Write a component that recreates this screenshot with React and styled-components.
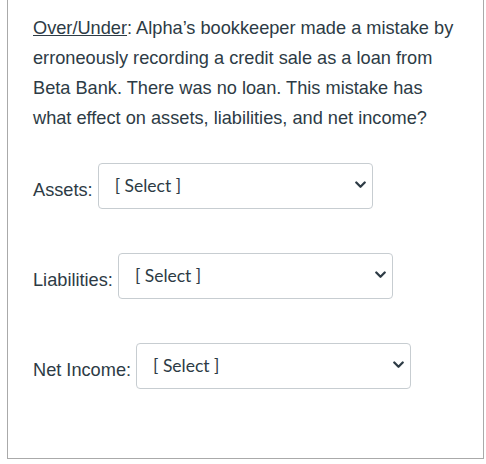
import React from "react";
import styled, { createGlobalStyle } from "styled-components";

const Global = createGlobalStyle`
  html, body { margin: 0; padding: 0; background: #fff; }
  body { font-family: "Liberation Sans", Arial, sans-serif; color: #2d3b45; }
`;

const Frame = styled.div`
  box-sizing: border-box;
  margin-left: 7px;
  width: 477px;
  height: 459px;
  border: 1px solid #aaaaaa;
  border-top: none;
  padding: 13px 24px 0 25px;
`;

const Question = styled.p`
  margin: 0;
  font-size: 18.2px;
  line-height: 30px;
  color: #2d3b45;
`;

const Term = styled.span`
  text-decoration: underline;
`;

const Field = styled.div`
  display: flex;
  align-items: center;
  gap: 5px;
  margin-top: ${(p) => p.$top}px;
`;

const Label = styled.span`
  font-size: 18.2px;
  padding-top: 9px;
  color: #2d3b45;
`;

const SelectBox = styled.div`
  box-sizing: border-box;
  width: 275px;
  height: 46px;
  border: 1px solid #c7cdd1;
  border-radius: 4px;
  display: flex;
  align-items: center;
  justify-content: space-between;
  padding: 0 6px 2px 16px;
  font-family: Lato, "Liberation Sans", sans-serif;
  font-size: 17.5px;
  color: #2d3b45;
  background: #fff;
`;

const Chevron = () => (
  <svg width="11" height="8" viewBox="0 0 11 8">
    <path d="M1.3 1.5 L5.5 5.7 L9.7 1.5" fill="none" stroke="#2d3b45" strokeWidth="2.3" strokeLinecap="round" strokeLinejoin="round" />
  </svg>
);

const fields = [
  { label: "Assets:", top: 30 },
  { label: "Liabilities:", top: 44 },
  { label: "Net Income:", top: 44 },
];

export default function App() {
  return (
    <>
      <Global />
      <Frame>
        <Question>
          <Term>Over/Under</Term>: Alpha’s bookkeeper made a mistake by erroneously recording a credit sale as a loan from Beta Bank. There was no loan. This mistake has what effect on assets, liabilities, and net income?
        </Question>
        {fields.map((f) => (
          <Field key={f.label} $top={f.top}>
            <Label>{f.label}</Label>
            <SelectBox>
              <span>[ Select ]</span>
              <Chevron />
            </SelectBox>
          </Field>
        ))}
      </Frame>
    </>
  );
}
